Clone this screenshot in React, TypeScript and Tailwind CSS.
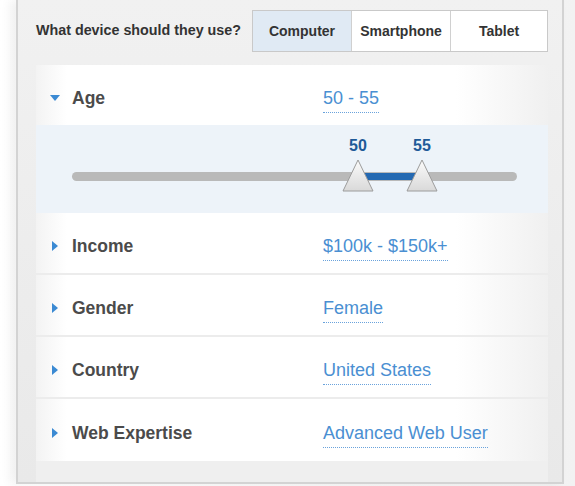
import React from "react";

const font = { fontFamily: '"Liberation Sans", Arial, sans-serif' };

function Tri({ down }: { down?: boolean }) {
  return down ? (
    <svg width="10" height="6" viewBox="0 0 10 6" className="block">
      <path d="M0 0 L10 0 L5 6 Z" fill="#3b8ad3" />
    </svg>
  ) : (
    <svg width="6" height="10" viewBox="0 0 6 10" className="block">
      <path d="M0 0 L6 5 L0 10 Z" fill="#3b8ad3" />
    </svg>
  );
}

function Thumb() {
  return (
    <svg width="32" height="33" viewBox="0 0 32 33" className="block">
      <defs>
        <linearGradient id="tg" x1="0" y1="0" x2="0" y2="1">
          <stop offset="0" stopColor="#fbfbfb" />
          <stop offset="1" stopColor="#d9d9d9" />
        </linearGradient>
      </defs>
      <path d="M16 1 L31 32 L1 32 Z" fill="url(#tg)" stroke="#9c9c9c" strokeWidth="1" strokeLinejoin="round" />
    </svg>
  );
}

function Value({ children }: { children: React.ReactNode }) {
  return (
    <div className="pt-[4px] text-[18px] leading-[22px] text-[#4a8fd2]">
      <span className="inline-block border-b border-dotted border-[#6aa3dc] pb-[3px]">{children}</span>
    </div>
  );
}

function Row({ label, value, last }: { label: string; value: string; last?: boolean }) {
  return (
    <div
      className={`flex h-[62px] items-center pt-[6px] bg-[linear-gradient(to_right,#f3f3f3_0%,#ffffff_6%,#ffffff_82%,#f0f0f0_100%)] ${
        last ? "" : "border-b-2 border-[#ececec]"
      }`}
    >
      <div className="flex w-[36px] justify-end pr-[14px]">
        <Tri />
      </div>
      <div className="w-[251px] text-[17.5px] leading-[22px] font-bold text-[#4b4b4b]">{label}</div>
      <Value>{value}</Value>
    </div>
  );
}

export default function App() {
  return (
    <div style={font} className="h-[486px] w-[575px] overflow-hidden bg-[linear-gradient(to_right,#ffffff_0%,#f2f2f2_100%)]">
      <div className="ml-[16px] h-[484px] w-[548px] border-x-2 border-b-2 border-[#d3d3d3] bg-[linear-gradient(to_bottom,#f1f1f1,#e9e9e9)] shadow-[-6px_0_10px_rgba(0,0,0,0.06)]">
        <div className="flex items-center pt-[10px]">
          <div className="w-[234px] pl-[18px] text-[14.3px] font-bold text-[#333]">What device should they use?</div>
          <div className="flex h-[42px] border border-[#c9c9c9] text-[14px] font-bold text-[#333]">
            <div className="flex w-[98px] items-center justify-center bg-[#e0eaf4]">Computer</div>
            <div className="flex w-[99px] items-center justify-center border-l border-[#d0d0d0] bg-white">Smartphone</div>
            <div className="flex w-[97px] items-center justify-center border-l border-[#d0d0d0] bg-white">Tablet</div>
          </div>
        </div>

        <div className="ml-[18px] mt-[13px] w-[512px]">
          <div className="flex h-[60px] items-center pt-[6px] bg-[linear-gradient(to_right,#f3f3f3_0%,#ffffff_6%,#ffffff_82%,#f0f0f0_100%)]">
            <div className="flex w-[36px] justify-end pr-[12px]">
              <Tri down />
            </div>
            <div className="w-[251px] text-[17.5px] leading-[22px] font-bold text-[#4b4b4b]">Age</div>
            <Value>50 - 55</Value>
          </div>

          <div className="h-[88px] bg-[#edf3f9] pl-[36px] pr-[31px] pt-[10px]">
            <div className="relative h-[70px]">
              <div className="absolute left-0 right-0 top-[37px] h-[9px] rounded-full bg-[#b9b9b9]" />
              <div className="absolute left-[286px] top-[38px] h-[7px] w-[64px] bg-[#2469b2]" />
              <div className="absolute left-[276px] top-[-1px] w-[20px] text-center text-[16px] font-bold text-[#1e5a98]">50</div>
              <div className="absolute left-[340px] top-[-1px] w-[20px] text-center text-[16px] font-bold text-[#1e5a98]">55</div>
              <div className="absolute left-[270px] top-[24px]">
                <Thumb />
              </div>
              <div className="absolute left-[334px] top-[24px]">
                <Thumb />
              </div>
            </div>
          </div>

          <Row label="Income" value="$100k - $150k+" />
          <Row label="Gender" value="Female" />
          <Row label="Country" value="United States" />
          <Row label="Web Expertise" value="Advanced Web User" last />
          <div className="h-[21px] bg-[#efefef]" />
        </div>
      </div>
    </div>
  );
}
